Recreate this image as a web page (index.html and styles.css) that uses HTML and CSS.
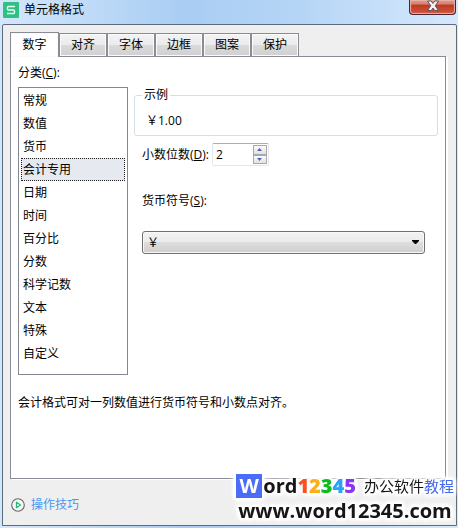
FILE: index.html
```html
<!DOCTYPE html>
<html lang="zh-CN">
<head>
  <meta charset="UTF-8" />
  <meta name="viewport" content="width=device-width, initial-scale=1.0" />
  <title>单元格格式</title>
  <link rel="stylesheet" href="styles.css">
</head>
<body>

  <header class="titlebar">
    <svg class="app-icon" viewBox="0 0 16 16" aria-hidden="true">
      <rect width="16" height="16" rx="1" fill="#2fc083" />
      <path d="M12 4.500H5.500Q4.500 4.500 4.500 5.500V7Q4.500 8 5.500 8H10.500Q11.500 8 11.500 9V10.500Q11.500 11.500 10.500 11.500H4" fill="none" stroke="#e6fff2" stroke-width="1.400" />
    </svg>
    <h1>单元格格式</h1>
    <button class="close" type="button" aria-label="关闭">
      <svg viewBox="0 0 14 12" aria-hidden="true">
        <path d="M1.500 1H5.200L7 3.500L8.800 1H12.500L9.200 5.800L12.500 10.500H8.800L7 8L5.200 10.500H1.500L4.800 5.800Z" fill="#f4f4f4" stroke="#5a5560" stroke-width="1" />
      </svg>
    </button>
  </header>

  <main class="client">
    <nav class="tabs">
      <button class="tab active" type="button">数字</button>
      <button class="tab" type="button">对齐</button>
      <button class="tab" type="button">字体</button>
      <button class="tab" type="button">边框</button>
      <button class="tab" type="button">图案</button>
      <button class="tab" type="button">保护</button>
    </nav>

    <section class="panel">
      <label class="list-label" for="category">分类(<u>C</u>):</label>
      <div class="columns">
        <select class="category" id="category" size="12">
          <option>常规</option>
          <option>数值</option>
          <option>货币</option>
          <option selected>会计专用</option>
          <option>日期</option>
          <option>时间</option>
          <option>百分比</option>
          <option>分数</option>
          <option>科学记数</option>
          <option>文本</option>
          <option>特殊</option>
          <option>自定义</option>
        </select>

        <div class="options">
          <fieldset class="sample">
            <legend>示例</legend>
            <output>￥1.00</output>
          </fieldset>

          <div class="decimals">
            <label for="decimals">小数位数(<u>D</u>):</label>
            <div class="spinner">
              <input type="number" id="decimals" value="2" min="0" max="30">
              <div class="steps">
                <button type="button" aria-label="增加" onclick="step(1)">
                  <svg viewBox="0 0 5 3" aria-hidden="true"><path d="M0 3L2.500 0L5 3Z" fill="#4a62b8" /></svg>
                </button>
                <button type="button" aria-label="减少" onclick="step(-1)">
                  <svg viewBox="0 0 5 3" aria-hidden="true"><path d="M0 0L2.500 3L5 0Z" fill="#4a62b8" /></svg>
                </button>
              </div>
            </div>
          </div>

          <div class="symbol">
            <label for="symbol">货币符号(<u>S</u>):</label>
            <div class="dropdown">
              <select id="symbol">
                <option>￥</option>
                <option>$</option>
              </select>
              <svg class="arrow" viewBox="0 0 7 4" aria-hidden="true"><path d="M0 0H7V1L4 4H3L0 1Z" fill="#000" /></svg>
            </div>
          </div>
        </div>
      </div>
      <p class="note">会计格式可对一列数值进行货币符号和小数点对齐。</p>
    </section>

    <footer>
      <a class="tips" href="#">
        <svg viewBox="0 0 14 14" aria-hidden="true">
          <circle cx="7" cy="7" r="6.300" fill="#f6f6f6" stroke="#666" stroke-width="1.100" />
          <path d="M5.500 4.300V9.700L9.500 7Z" fill="none" stroke="#20bf79" stroke-width="1.300" stroke-linejoin="round" />
        </svg>
        操作技巧
      </a>
    </footer>
  </main>

  <div class="watermark">
    <div class="brand">
      <span class="brand-w">W</span>
      <span class="brand-word">ord<b class="red">1</b><b class="orange">2</b><b class="green">3</b><b class="sky">4</b><b class="violet">5</b></span>
      <span class="brand-cn">办公软件<b>教程</b></span>
    </div>
    <div class="site">www.word12345.com</div>
  </div>

  <script>
    function step(n) {
      const input = document.getElementById('decimals');
      if (n > 0) {
        input.stepUp();
      } else {
        input.stepDown();
      }
    }
  </script>
</body>
</html>
```
FILE: styles.css
```css
* {
  box-sizing: border-box;
}

body {
  position: relative;
  display: flex;
  flex-direction: column;
  min-height: 100vh;
  margin: 0;
  padding: 0 1px 2px 2px;
  background: linear-gradient(to right, #d3e7fb, #a9cdf3 40%, #b5d5f6 65%, #d5e8fc);
  color: #000;
  font-family: "Open Sans", "Noto Sans CJK SC", sans-serif;
  font-size: 12px;
  line-height: 16px;
}

button,
input,
select {
  font: inherit;
  color: inherit;
}

.titlebar {
  display: flex;
  align-items: flex-start;
  height: 24px;
  padding-right: 1px;
}

.app-icon {
  width: 16px;
  height: 16px;
  margin: 2px 5px 0 1px;
}

h1 {
  flex: 1;
  margin: 2px 0 0;
  font-size: 12px;
  font-weight: normal;
}

.close {
  width: 47px;
  height: 15px;
  padding: 0;
  border: 1px solid #4c2430;
  border-top: none;
  border-radius: 0 0 4px 4px;
  background: linear-gradient(#dd9a8e, #d6806f 30%, #bd3a24 35%, #d0553f);
  box-shadow: inset 0 0 1px 1px #e7b3a8;
}

.close svg {
  display: block;
  width: 14px;
  height: 12px;
  margin: 0 auto 4px;
}

.client {
  display: flex;
  flex-direction: column;
  flex: 1;
  padding: 7px 10px 12px 7px;
  border: 1px solid #5e6b7c;
  border-radius: 2px 2px 0 0;
  background: #efefef;
}

.tabs {
  display: flex;
  align-items: flex-end;
}

.tab {
  width: 48px;
  height: 24px;
  margin-bottom: -1px;
  padding: 0;
  border: 1px solid #8b8b96;
  background: linear-gradient(#f3f3f3, #ebebeb 48%, #dadada 52%, #d0d0d0);
  box-shadow: inset 0 0 0 1px #fafafa;
}

.tab.active {
  z-index: 1;
  width: 49px;
  height: 25px;
  border-bottom: none;
  background: #fff;
}

.panel {
  flex: 1;
  padding: 8px 7px;
  border: 1px solid #8b8b96;
  background: #fff;
  box-shadow: 2px 1px 0 #fff;
}

.list-label {
  display: block;
  margin-bottom: 6px;
}

.columns {
  display: flex;
  gap: 6px;
}

.category {
  flex: none;
  width: 110px;
  height: 288px;
  padding: 1px 2px;
  border: 1px solid #828790;
  border-radius: 0;
  outline: none;
  background: #fff;
  overflow: hidden;
}

.category option {
  height: 23px;
  min-height: 23px;
  padding: 1px 1px 5px;
  border: 1px solid transparent;
  line-height: 15px;
}

.category option:checked {
  border: 1px dotted #222;
  background: linear-gradient(#e6eaf0, #e6eaf0);
  color: #000;
}

.options {
  flex: 1;
  min-width: 0;
}

.sample {
  margin: 0;
  padding: 10px 11px 6px;
  border: 1px solid #d5dfe5;
  border-radius: 3px;
}

.sample legend {
  margin-left: -4px;
  padding: 0 2px;
}

.decimals {
  display: flex;
  align-items: center;
  gap: 3px;
  margin: 7px 8px 0;
}

.spinner {
  display: flex;
  width: 57px;
  height: 23px;
  padding: 1px;
  border: 1px solid #e3e6ee;
  border-top-color: #abadb3;
  border-radius: 2px;
}

.spinner input {
  flex: 1;
  min-width: 0;
  padding: 0 2px;
  border: none;
  outline: none;
  background: none;
  appearance: textfield;
}

.spinner input::-webkit-inner-spin-button {
  appearance: none;
  margin: 0;
}

.steps {
  display: flex;
  flex-direction: column;
  width: 14px;
  height: 19px;
}

.steps button {
  display: flex;
  align-items: center;
  justify-content: center;
  flex: 1;
  padding: 0;
  border: 1px solid #a9a9ad;
  background: linear-gradient(#fafafa, #e2e2e2);
}

.steps svg {
  width: 5px;
  height: 3px;
}

.symbol {
  margin: 27px 13px 0 8px;
}

.dropdown {
  position: relative;
  margin-top: 22px;
}

.dropdown select {
  display: block;
  width: 100%;
  height: 23px;
  padding: 0 4px;
  border: 1px solid #707070;
  border-radius: 3px;
  background: linear-gradient(#f2f2f2, #ebebeb 48%, #dddddd 50%, #cfcfcf);
  box-shadow: inset 0 0 0 1px #f8f8f8;
  appearance: none;
}

.arrow {
  position: absolute;
  top: 9px;
  right: 6px;
  width: 7px;
  height: 4px;
  pointer-events: none;
}

.note {
  margin: 20px 0 0;
}

footer {
  padding-top: 18px;
}

.tips {
  display: flex;
  align-items: center;
  gap: 6px;
  width: max-content;
  color: #4b96f3;
  text-decoration: none;
}

.tips svg {
  width: 14px;
  height: 14px;
  margin-left: 1px;
}

/* Site mark over the lower right corner */
.watermark {
  position: absolute;
  right: 4px;
  bottom: 4px;
  color: #161616;
  font-weight: bold;
  pointer-events: none;
  filter: drop-shadow(0 0 1px #fff) drop-shadow(0 0 1px #fff) drop-shadow(0 0 1px #fff) drop-shadow(0 0 2px #fff) drop-shadow(0 0 1px #fff);
}

.brand {
  display: flex;
  align-items: center;
}

.brand-w {
  width: 26px;
  height: 24px;
  background: #4a6cf7;
  color: #fff;
  font-size: 20px;
  line-height: 24px;
  text-align: center;
}

.brand-word {
  margin: 0 8px 0 1px;
  font-size: 20px;
  line-height: 24px;
}

.brand-cn {
  font-family: "Noto Sans CJK SC", sans-serif;
  font-size: 15px;
  font-weight: normal;
}

.brand-cn b {
  color: #4468ee;
  font-weight: normal;
}

.site {
  padding-left: 2px;
  font-size: 20px;
  line-height: 26px;
}

.red {
  color: #f8501e;
}

.orange {
  color: #fbae17;
}

.green {
  color: #0fba1c;
}

.sky {
  color: #2ba1fa;
}

.violet {
  color: #8a35f5;
}
```
